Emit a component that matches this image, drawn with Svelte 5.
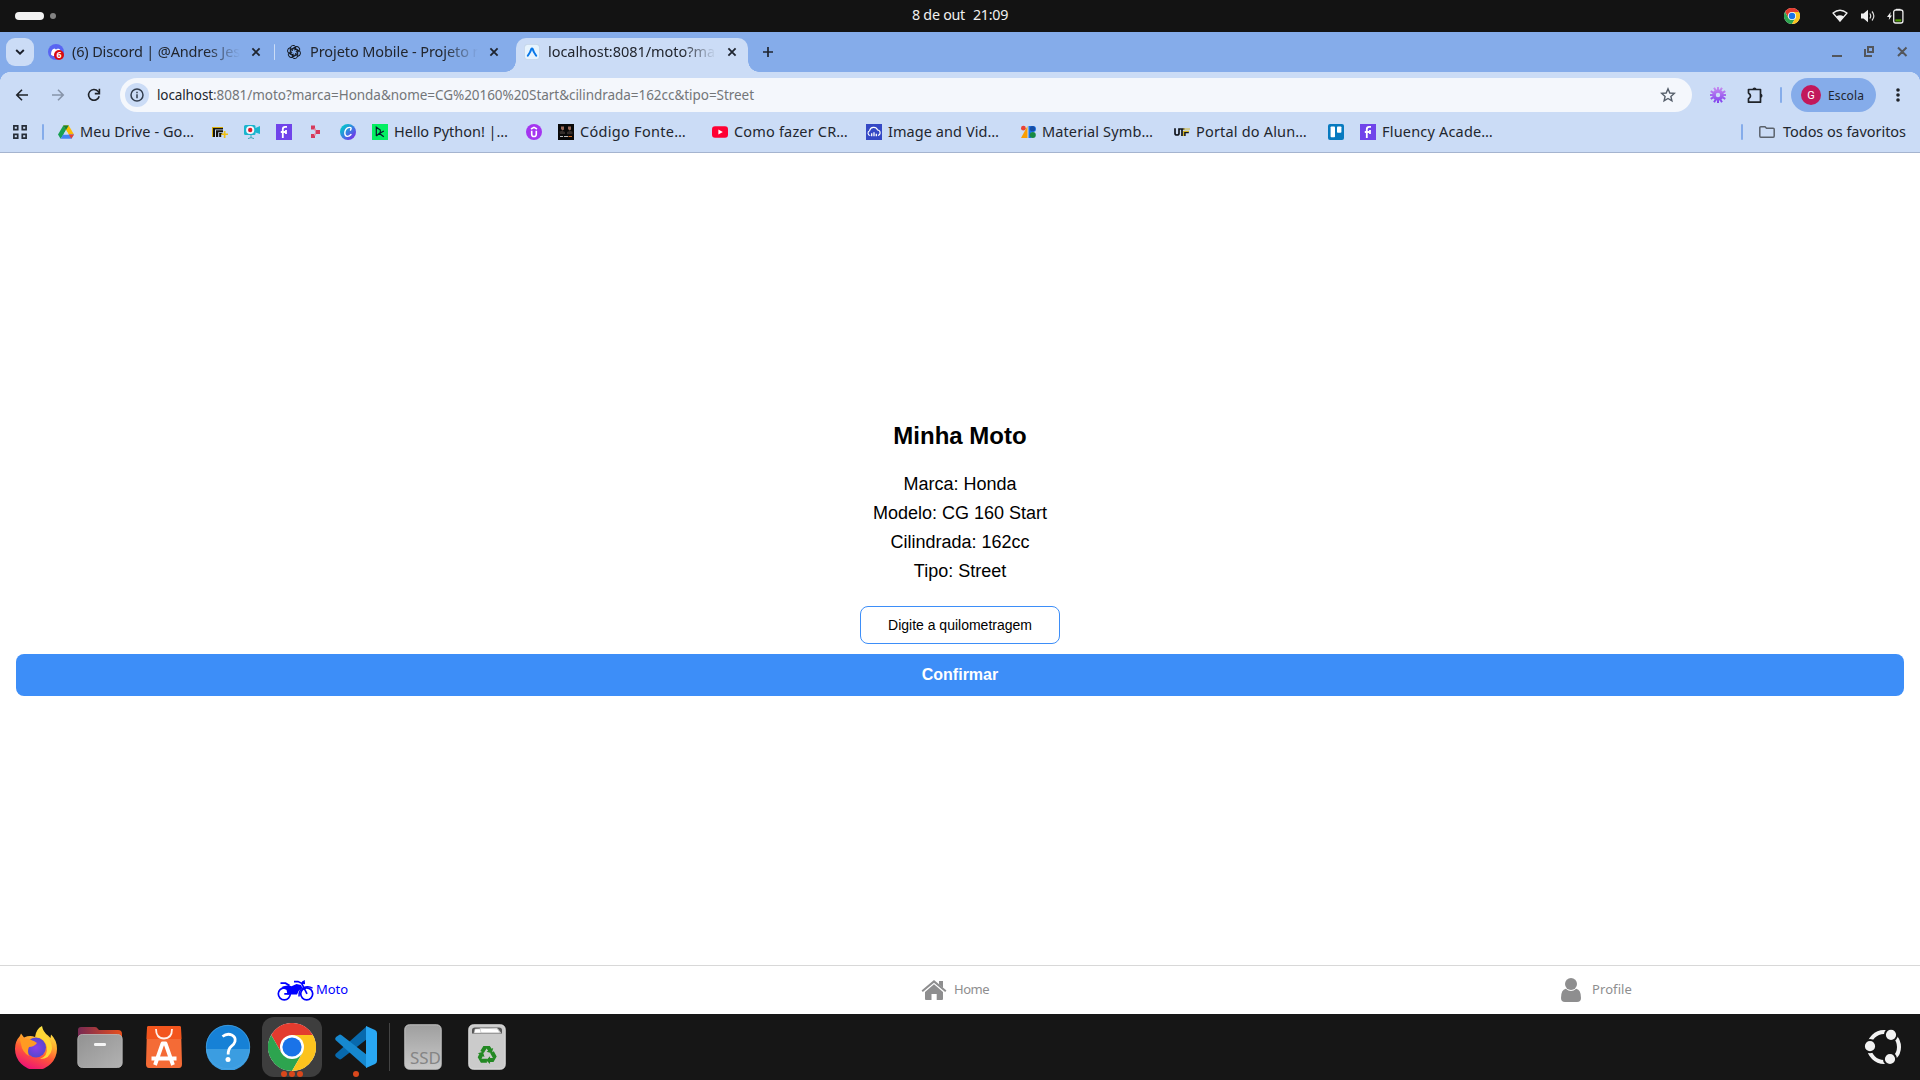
<script>
  // Spreads the letters of a label so that it fills the given width.
  function fit(node, width) {
    const natural = node.getBoundingClientRect().width;
    const count = node.textContent.length;
    node.style.letterSpacing = `${(width - natural) / count}px`;
  }

  const tabs = [
    { icon: 'discord', title: '(6) Discord | @Andres Jes', width: 168, kind: 'first' },
    { icon: 'gpt', title: 'Projeto Mobile - Projeto m', width: 176, kind: 'second' },
    { icon: 'expo', title: 'localhost:8081/moto?ma', width: 167, kind: 'active' }
  ];

  const bookmarks = [
    { icon: 'drive', label: 'Meu Drive - Go…', text: 114, slot: 154 },
    { icon: 'utfplus', slot: 32 },
    { icon: 'camera', slot: 32 },
    { icon: 'fluency', slot: 32 },
    { icon: 'pink', slot: 32 },
    { icon: 'canva', slot: 32 },
    { icon: 'datacamp', label: 'Hello Python! |…', text: 114, slot: 154 },
    { icon: 'udemy', slot: 32 },
    { icon: 'codigo', label: 'Código Fonte…', text: 106, slot: 154 },
    { icon: 'youtube', label: 'Como fazer CR…', text: 114, slot: 154 },
    { icon: 'cloud', label: 'Image and Vid…', text: 111, slot: 154 },
    { icon: 'material', label: 'Material Symb…', text: 111, slot: 154 },
    { icon: 'utf', label: 'Portal do Alun…', text: 111, slot: 154 },
    { icon: 'trello', slot: 32 },
    { icon: 'fluency', label: 'Fluency Acade…', text: 111, slot: 154 }
  ];

  const details = ['Marca: Honda', 'Modelo: CG 160 Start', 'Cilindrada: 162cc', 'Tipo: Street'];
</script>

{#snippet chromeLogo(size)}
  <svg width={size} height={size} viewBox="0 0 48 48">
    <circle cx="24" cy="24" r="24" fill="#fff" />
    <path d="M24 12H44.8A24 24 0 0 0 3.2 12L13.6 30Z" fill="#e33b2e" />
    <path d="M13.6 30L3.2 12A24 24 0 0 0 24 48L34.4 30Z" fill="#2da44f" />
    <path d="M34.4 30L24 48A24 24 0 0 0 44.8 12H24Z" fill="#fcc31e" />
    <circle cx="24" cy="24" r="12" fill="#fff" />
    <circle cx="24" cy="24" r="9.6" fill="#1a73e8" />
  </svg>
{/snippet}

{#snippet closeMark()}
  <svg class="close" width="10" height="10" viewBox="0 0 10 10"><path d="M1.4 1.4l7.2 7.2M8.6 1.4L1.4 8.6" stroke="#1f2530" stroke-width="1.8" /></svg>
{/snippet}

{#snippet favicon(name)}
  <svg class="fav" width="16" height="16" viewBox="0 0 16 16">
    {#if name === 'discord'}
      <circle cx="8" cy="8" r="8" fill="#5865f2" />
      <path d="M3 10.8C3 8 4 5.5 5.2 5l1.5-.5.5.8h2l.5-.8 1.6.5c1.2.8 2 3 2 5.8l-2 1.2H5z" fill="#fff" />
      <circle cx="11" cy="11" r="5" fill="#d80b12" />
      <text x="11" y="14.2" text-anchor="middle" font-size="8.8" font-weight="700" fill="#fff">6</text>
    {:else if name === 'gpt'}
      <g fill="none" stroke="#111720" stroke-width="1">
        {#each [0, 60, 120, 180, 240, 300] as angle}
          <path transform="rotate({angle} 8 8)" d="M4.3 9.6V4.4A3 3 0 0 1 9.6 2.5M6.4 6.9V5.4L10.2 3.2" />
        {/each}
      </g>
    {:else if name === 'expo'}
      <rect x=".3" y=".3" width="15.4" height="15.4" rx="3.5" fill="#e7f4fe" stroke="#b5c6dc" stroke-width=".6" />
      <path d="M3.8 11.8Q6.8 7.5 7.3 5Q8 3.8 8.7 5Q9.2 7.5 12.2 11.8" fill="none" stroke="#0878e8" stroke-width="2" stroke-linecap="round" stroke-linejoin="round" />
    {:else if name === 'drive'}
      <path d="M5.3 1.5h5.4L5.2 11 2.6 14.8 0 10.5z" fill="#18a052" />
      <path d="M5.3 1.5h5.4L16 10.5h-5.3z" fill="#fbbb05" />
      <path d="M5.3 1.5L8 6.1l2.7-4.6z" fill="#188038" />
      <path d="M5.2 10.5H16l-2.6 4.3H2.6z" fill="#4484f3" />
      <path d="M10.8 10.5H16l-2.6 4.3z" fill="#e94235" />
      <path d="M8 6l2.7 4.5H5.3z" fill="#cbdcf6" />
    {:else if name === 'utfplus'}
      <path d="M0 3h11v2.4H3V13H0z" fill="#17150f" />
      <path d="M4 6.2h7v2H6.2V13H4z" fill="#17150f" />
      <path d="M7.2 9h3v1.6h-1V13h-2z" fill="#17150f" />
      <path d="M0 3h11v.9H1V13H0z" fill="#d9ad08" />
      <path d="M9.3 9.5H16v1.6H9.3zM11.8 7h1.7v7h-1.7z" fill="#f0bf12" />
    {:else if name === 'camera'}
      <path d="M0 2.5Q0 1 1.5 1H10q1.5 0 1.5 1.5V4L16 2v8l-4.5-1.5V10Q11.5 11 10 11H1.5Q0 11 0 9.5z" fill="#19b5ce" />
      <circle cx="6.2" cy="6" r="4.1" fill="#f5f7fa" /><circle cx="6.2" cy="6" r="2.2" fill="#e1192a" />
      <path d="M7 11v2.5M4 14.6q3-2 6 0" stroke="#3aa9b9" fill="none" />
    {:else if name === 'fluency'}
      <path d="M0 0h16v16H0z" fill="#7044ea" />
      <path d="M6.8 14V5.3Q6.8 2.9 9.2 2.9H11M4.8 8H10M10 6v4" fill="none" stroke="#fff" stroke-width="1.8" />
    {:else if name === 'pink'}
      <path d="M3 1.5h4v4H3zM7.5 6H12v4H7.5zM3 10h4v4H3z" fill="#d63a5c" /><path d="M6 4.5h2v2H6zM6 9.5h2v2H6z" fill="#e591a8" />
    {:else if name === 'canva'}
      <defs><linearGradient id="canva" x1="0" y1="0" x2="1" y2="1"><stop offset=".15" stop-color="#04c3cc" /><stop offset=".55" stop-color="#3e76e4" /><stop offset=".9" stop-color="#7d2ae8" /></linearGradient></defs>
      <circle cx="8" cy="8" r="8" fill="url(#canva)" />
      <path d="M10.5 6.1Q12.2 3.4 9.4 3.4C6.2 3.4 4.7 7 4.8 9.3C5 13.4 9 13 11 10.5" fill="none" stroke="#fff" stroke-width="1.4" stroke-linecap="round" />
    {:else if name === 'datacamp'}
      <path d="M0 0h16v16H0z" fill="#03ef62" />
      <path d="M4.3 12V3.2L8.3 6v2.5L4.3 12M11.8 7L7.5 9.5l4.3 3.2" fill="none" stroke="#05192d" stroke-width="1.2" />
    {:else if name === 'udemy'}
      <circle cx="8" cy="8" r="8" fill="#a435f0" />
      <path d="M5.7 6.8v3.4Q5.7 12.5 8 12.5t2.3-2.3V6.8M5 5L8 3.3 11 5" fill="none" stroke="#fff" stroke-width="1.6" />
    {:else if name === 'codigo'}
      <path d="M0 0h16v16H0z" fill="#090909" />
      <path d="M3 2.5h3v3L4.5 6.5 3 5zM10 2.5h3v3L11.5 6.5 10 5z" fill="#9b6b5a" />
      <path d="M1.5 7.5L4 6.8l3 1.2v2H2zM9 8l3-1.2 2.5 1v2.5H9z" fill="#342d2a" />
      <path d="M2 12.5h3M6 12.5h4" stroke="#b9b9b9" stroke-width="1" /><path d="M10.5 12.5H14" stroke="#d26b24" />
    {:else if name === 'youtube'}
      <rect y="2.3" width="16" height="11.4" rx="3" fill="#ff0033" /><path d="M6.4 5.5v5L10.8 8z" fill="#fff" />
    {:else if name === 'cloud'}
      <path d="M0 0h16v16H0z" fill="#3448c5" />
      <path d="M4.2 11.5A2.5 2.5 0 0 1 3.6 6.7A4.2 4.2 0 0 1 11.6 6A2.8 2.8 0 0 1 12 11.5" fill="none" stroke="#fff" stroke-width="1.1" />
      <path d="M5.7 9.2v3M8 8.2V12.2M10.3 9.7V12.2" stroke="#fff" stroke-width="1.3" />
    {:else if name === 'material'}
      <circle cx="3.4" cy="4.2" r="2.4" fill="#ea4335" /><path d="M7.5 2v12H1z" fill="#f99f05" /><path d="M8.5 2H13a3 3 0 0 1 0 6h-1.5v6h-3z" fill="#1a73e8" /><circle cx="12.5" cy="4.7" r="2.6" fill="#174ea6" /><circle cx="12.8" cy="11" r="3" fill="#178a43" />
    {:else if name === 'utf'}
      <path d="M1 4.3v5.2Q1 11 3 11t2-1.5V4.3M5.5 5h5M8 5v7M10.8 12V8.5h4" fill="none" stroke="#11151c" stroke-width="1.7" /><path d="M9.2 5H16M10.2 7.4H15M9.6 7v5" fill="none" stroke="#d4b628" stroke-width="1.2" />
    {:else if name === 'trello'}
      <rect width="16" height="16" rx="2" fill="#087abf" /><rect x="2.6" y="2.4" width="4.4" height="10.8" rx=".8" fill="#fff" /><rect x="9" y="2.4" width="4.4" height="6.4" rx=".8" fill="#fff" />
    {/if}
  </svg>
{/snippet}

<div class="screen">
  <header class="topbar">
    <div class="workspaces"><span class="pill"></span><span class="dot"></span></div>
    <div class="clock"><span use:fit={53}>8 de out</span><span use:fit={35}>21:09</span></div>
    <div class="tray">
      {@render chromeLogo(16)}
      <svg class="wifi" width="16" height="14" viewBox="0 0 16 14"><path d="M1 4Q8-1.5 15 4L8 12.2z" fill="none" stroke="#f0f0f0" stroke-width="1.3" stroke-linejoin="round" /><path d="M4.2 7.4Q8 5 11.8 7.4L8 12.4z" fill="#f0f0f0" /></svg>
      <svg class="volume" width="16" height="14" viewBox="0 0 16 14"><path d="M1 4.5h2.5L8 .8v12.4L3.5 9.5H1z" fill="#f0f0f0" /><path d="M9.8 4.5q1.8 2.5 0 5M12 2.5q3.7 4.5 0 9" fill="none" stroke="#dcdcdc" stroke-width="1.2" /></svg>
      <svg width="17" height="16" viewBox="0 0 17 16"><path d="M3.7 4L0 9h2.2L1.8 12 5 7.5H3.2z" fill="#f0f0f0" /><rect x="6.7" y="2" width="9.2" height="13" rx="2" fill="none" stroke="#f0f0f0" stroke-width="1.3" /><path d="M9 .8h4.5V2H9z" fill="#f0f0f0" /><path d="M8.3 11.3h6V13.5h-6z" fill="#4e9a06" /></svg>
    </div>
  </header>

  <div class="tabstrip">
    <div class="search"><svg width="10" height="6" viewBox="0 0 10 6"><path d="M1.2 1L5 4.7 8.8 1" fill="none" stroke="#1b202a" stroke-width="1.9" /></svg></div>
    {#each tabs as tab}
      <div class="tab {tab.kind}">
        {@render favicon(tab.icon)}
        <div class="title"><span use:fit={tab.width}>{tab.title}</span></div>
        {@render closeMark()}
      </div>
    {/each}
    <svg class="plus" width="12" height="12" viewBox="0 0 12 12"><path d="M6 1v10M1 6h10" stroke="#1f2530" stroke-width="1.7" /></svg>
    <svg class="controls" width="76" height="12" viewBox="0 0 76 12"><path d="M0 10h10" stroke="#53565c" stroke-width="2" /><g fill="none" stroke="#53565c" stroke-width="2"><path d="M36 1h5v5h-5zM33 3v7h7M66 1.5l8.5 8.5M74.5 1.5L66 10" /></g></svg>
  </div>

  <div class="chrome-body">
    <div class="toolbar">
      <svg width="14" height="14" viewBox="0 0 14 14"><path d="M13 7H2M7 1.8L1.8 7 7 12.2" fill="none" stroke="#1f2329" stroke-width="1.6" /></svg>
      <svg width="14" height="14" viewBox="0 0 14 14"><path d="M1 7h11M7 1.8L12.2 7 7 12.2" fill="none" stroke="#8794a9" stroke-width="1.6" /></svg>
      <svg width="14" height="14" viewBox="0 0 14 14"><path d="M12.2 8.2A5.4 5.4 0 1 1 11 3.3L12.3 4.7" fill="none" stroke="#1f2329" stroke-width="1.6" /><path d="M12.4.8v4.8H7.8" fill="none" stroke="#1f2329" stroke-width="1.6" /></svg>
      <div class="omnibox">
        <div class="info"><svg width="14" height="14" viewBox="0 0 14 14"><circle cx="7" cy="7" r="6" fill="none" stroke="#333e4e" stroke-width="1.5" /><path d="M7 6.2v4M7 3.7v1.5" stroke="#333e4e" stroke-width="1.5" /></svg></div>
        <div class="url"><b use:fit={56}>localhost</b><span use:fit={541}>:8081/moto?marca=Honda&amp;nome=CG%20160%20Start&amp;cilindrada=162cc&amp;tipo=Street</span></div>
        <svg class="star" width="16" height="16" viewBox="0 0 16 16"><path d="M8 1.8l1.8 4.2 4.5.4-3.4 3 1 4.4L8 11.5l-3.9 2.3 1-4.4-3.4-3 4.5-.4z" fill="none" stroke="#555e6a" stroke-width="1.4" /></svg>
      </div>
      <svg class="gear" width="16" height="16" viewBox="0 0 16 16">
        <defs><linearGradient id="gear" gradientUnits="userSpaceOnUse" x1="0" y1="0" x2="0" y2="16"><stop offset="0" stop-color="#c88cf0" /><stop offset="1" stop-color="#8042ee" /></linearGradient></defs>
        <circle cx="8" cy="8" r="4" fill="none" stroke="url(#gear)" stroke-width="3.6" />
        <path d="M7 0h2v3H7zM7 13h2v3H7zM0 7h3v2H0zM13 7h3v2h-3zM3.2 1.2l1.7-1 1.5 2.6-1.7 1zM11.1.2l1.7 1-1.5 2.6-1.7-1zM1.2 3.2L3.8 4.7 2.8 6.4.2 4.9zM14.8 3.2l1 1.7-2.6 1.5-1-1.7zM.2 11.1l2.6-1.5 1 1.7-2.6 1.5zM13.2 9.6l2.6 1.5-1 1.7-2.6-1.5zM4.7 12.2l1.7 1-1.5 2.6-1.7-1zM11.3 12.2l1.5 2.6-1.7 1-1.5-2.6z" fill="url(#gear)" />
      </svg>
      <svg class="puzzle" width="17" height="17" viewBox="0 0 17 17"><path d="M1.5 2.5h12v12.7h-12v-3.4q4-2.7 0-5.8z" fill="none" stroke="#1f2329" stroke-width="1.7" stroke-linejoin="round" /><path d="M5.5 2.5a2 2 0 0 1 4 0zM13.5 6.8a2 2 0 0 1 0 4z" fill="#1f2329" /></svg>
      <span class="rule"></span>
      <div class="profile"><span class="avatar">G</span><span use:fit={36}>Escola</span></div>
      <svg class="dots" width="4" height="14" viewBox="0 0 4 14" fill="#1f2329"><circle cx="2" cy="2" r="1.8" /><circle cx="2" cy="7" r="1.8" /><circle cx="2" cy="12" r="1.8" /></svg>
    </div>
    <div class="bookmarks">
      <svg width="14" height="14" viewBox="0 0 14 14" fill="none" stroke="#252c37" stroke-width="1.7"><path d="M.9.9h3.8v3.8H.9zM9.3.9h3.8v3.8H9.3zM.9 9.3h3.8v3.8H.9zM9.3 9.3h3.8v3.8H9.3z" /></svg>
      <span class="rule first-rule"></span>
      {#each bookmarks as item}
        <div class="bookmark" style:width="{item.slot}px">
          {@render favicon(item.icon)}
          {#if item.label}<span class="label" use:fit={item.text}>{item.label}</span>{/if}
        </div>
      {/each}
      <div class="all">
        <span class="rule"></span>
        <svg width="16" height="12" viewBox="0 0 16 12"><path d="M.8 10V1.8Q.8.8 1.8.8H6L7.5 2.3h6.7q1 0 1 1V10q0 1.2-1 1.2H1.8q-1 0-1-1.2z" fill="none" stroke="#5b626c" stroke-width="1.5" /></svg>
        <span class="label" use:fit={123}>Todos os favoritos</span>
      </div>
    </div>
  </div>

  <main>
    <h1>Minha Moto</h1>
    {#each details as line}<p>{line}</p>{/each}
    <div class="field">Digite a quilometragem</div>
    <div class="confirm">Confirmar</div>
  </main>

  <nav>
    <div class="nav-item moto">
      <svg width="38" height="21" viewBox="0 0 38 21">
        <g fill="none" stroke="#00f"><circle cx="7.3" cy="13.8" r="6" stroke-width="1.7" /><circle cx="29.7" cy="13.8" r="6" stroke-width="1.7" /><path d="M30 13.8L24.3 2.6M17 1.6h4l3.5 1.6H28" stroke-width="1.7" /><path d="M3.5 3.2h5L12.5 5.6M7.3 13.8h5" stroke-width="1.8" /><path d="M22 16.5Q21.5 9.5 26.5 7.6Q31.5 5.6 35.5 8.2" stroke-width="1.5" /></g>
        <path d="M5.5 6.5L11.5 5.2l3 1L19.5 4l4.5 1 1.3 2.8-3.5 3L20 14.5H10.5l-1-4.7L5 8.2z" fill="#00f" /><path d="M25 1.6L27.8 0v4.2L25 3.8z" fill="#00f" />
      </svg>
      <span use:fit={32}>Moto</span>
    </div>
    <div class="nav-item home">
      <svg width="26" height="20" viewBox="0 0 26 20" fill="#8e8e8f"><path d="M13 4.3L22 12v7q0 1-1 1h-5.3v-6h-5.2v6H5q-1 0-1-1v-7z" /><path d="M18 1h4v7l-4-3.4z" /><path d="M1.2 11.2L13 1.4 24.8 11.2" fill="none" stroke="#8e8e8f" stroke-width="2" /></svg>
      <span use:fit={35}>Home</span>
    </div>
    <div class="nav-item person">
      <svg width="22" height="24" viewBox="0 0 22 24" fill="#8e8e8f"><circle cx="11" cy="6" r="6" /><path d="M5.8 10.8Q11 15.2 16.2 10.8Q21 11.8 21 20Q21 24 17 24H5Q1 24 1 20Q1 11.8 5.8 10.8z" /></svg>
      <span use:fit={40}>Profile</span>
    </div>
  </nav>

  <footer>
    <div class="app">
      <svg width="44" height="44" viewBox="0 0 44 44">
        <defs>
          <linearGradient id="fox" x1=".75" y1="0" x2=".35" y2="1"><stop offset="0" stop-color="#fff44f" /><stop offset=".35" stop-color="#ffb02e" /><stop offset=".62" stop-color="#ff5a36" /><stop offset="1" stop-color="#ec0f78" /></linearGradient>
          <radialGradient id="globe"><stop offset="0" stop-color="#8b3fe8" /><stop offset="1" stop-color="#5548cf" /></radialGradient>
        </defs>
        <path d="M28 1Q29 7 34 10.5L36.5 13L37 9.5Q43 15 43 24A21 21 0 0 1 1 24Q1 16 6 11L7 8.5 10 12.5Q16 10 21 12Q22 4 28 1z" fill="url(#fox)" />
        <circle cx="22" cy="22.5" r="10" fill="url(#globe)" />
        <path d="M6 10Q7 13 10 14Q18 14 23 18Q20 22 15 22Q13 26 15 31Q8 27 7 19Q5 14 6 10z" fill="#ff9b22" />
        <path d="M22 12Q31 13 33 22Q34 31 26 34Q36 34 38 24Q38 15 32 11L28 4Q22 6 22 12z" fill="#ffd735" />
      </svg>
    </div>
    <div class="app">
      <svg width="46" height="42" viewBox="0 0 46 42">
        <defs><linearGradient id="folder"><stop offset="0" stop-color="#772953" /><stop offset="1" stop-color="#e8501e" /></linearGradient><linearGradient id="drawer" x1="0" y1="0" x2="1" y2="1"><stop offset="0" stop-color="#929292" /><stop offset="1" stop-color="#b2b2b2" /></linearGradient></defs>
        <path d="M1 8V4q0-3 3-3h14q2 0 3 2l1 1h19q4 0 4 4v12H1z" fill="url(#folder)" /><rect x=".8" y="8.5" width="44.4" height="33" rx="4.5" fill="url(#drawer)" stroke="#bbb" stroke-width=".8" /><rect x="17" y="17" width="12" height="3" rx="1.3" fill="#f5f5f5" />
      </svg>
    </div>
    <div class="app">
      <svg width="38" height="44" viewBox="0 0 38 44">
        <path d="M4 1h30q2 0 2 2l1 36q0 4-3 4H4q-3 0-3-4L2 3q0-2 2-2z" fill="#f46b36" /><path d="M4 1h30q2 0 2 2l.4 11H1.6L2 3q0-2 2-2z" fill="#f3551d" />
        <path d="M11 4q0 9.5 8 9.5T27 4" fill="none" stroke="#fff1ea" stroke-width="1.8" /><path d="M10 40L17.5 18.5H20.5L28 40M6.5 33.5H31.5" fill="none" stroke="#fff" stroke-width="3.8" stroke-linejoin="round" />
      </svg>
    </div>
    <div class="app">
      <svg width="46" height="46" viewBox="0 0 46 46"><circle cx="23" cy="23" r="22" fill="#1681d6" /><path d="M1 25h44a22 22 0 0 1-44 0z" fill="#3b9de1" /><circle cx="23" cy="23" r="21.7" fill="none" stroke="#4aa6e5" stroke-width=".7" /><path d="M17.5 12.5Q22 9 26.8 11Q31 13 30 17.5Q29.4 20 26.3 22.3Q23 25 23.2 30.5" fill="none" stroke="#fff" stroke-width="2.8" /><circle cx="23" cy="35.5" r="2.5" fill="#fff" /></svg>
    </div>
    <div class="app current">{@render chromeLogo(48)}<span class="running"><i></i><i></i><i></i></span></div>
    <div class="app">
      <svg width="44" height="44" viewBox="0 0 44 44"><path d="M2 32L5 34Q6 35 8 33.5L33 14V1L1.5 29Q.6 30.5 2 32z" fill="#0869ad" /><path d="M2 12L5 10Q6 9 8 10.5L33 30v13L1.5 15Q.6 13.5 2 12z" fill="#1688cf" /><path d="M32 1l9 4q2 1 2 3v28q0 2-2 3l-9 4z" fill="#29a7f3" /></svg>
      <span class="running"><i></i></span>
    </div>
    <span class="divider"></span>
    <div class="app drive">
      <svg width="38" height="46" viewBox="0 0 38 46"><defs><linearGradient id="metal" x1="0" y1="0" x2="0" y2="1"><stop offset="0" stop-color="#9f9f9f" /><stop offset="1" stop-color="#c8c8c8" /></linearGradient></defs><rect x=".8" y=".8" width="36.4" height="44.4" rx="4.5" fill="url(#metal)" stroke="#c4c4c4" /><text x="6" y="40" textLength="31" lengthAdjust="spacingAndGlyphs" font-size="16.5" fill="#858585">SSD</text></svg>
    </div>
    <div class="app">
      <svg width="38" height="46" viewBox="0 0 38 46">
        <rect x=".8" y=".8" width="36.4" height="44.4" rx="4.5" fill="#cbcbcb" stroke="#e1e1e1" /><path d="M4 9.5V6q0-2.5 3-2.5h24q3 0 3 2.5v3.5z" fill="#555" /><path d="M6 9l1-4 22-1 3 5zM12 4l18 1 3 4H13z" fill="#fff" stroke="#aaa" stroke-width=".5" />
        <g fill="#238923">{#each [0, 120, 240] as angle}<path transform="rotate({angle} 19 31)" d="M12.3 27L15.4 21.9H21.8L23.6 24.8L25.2 23.9L23.9 29.2L18.5 27.8L20.1 26.8L18.6 24.4L15.8 29.1Z" />{/each}</g>
      </svg>
    </div>
    <svg class="ubuntu" width="38" height="38" viewBox="0 0 38 38">
      <circle cx="20" cy="19" r="15" fill="none" stroke="#f2f2f2" stroke-width="4" />
      <g fill="#f2f2f2" stroke="#161616" stroke-width="2"><circle cx="6" cy="18.2" r="6.1" /><circle cx="27" cy="6.8" r="6.1" /><circle cx="26" cy="31" r="6.1" /></g>
    </svg>
  </footer>
</div>

<style>
  :global(body) { margin: 0; overflow: hidden; }
  .screen { width: 1920px; height: 1080px; display: flex; flex-direction: column; background: #fff; font-family: "Noto Sans", "Open Sans", sans-serif; font-size: 14.5px; color: #22262e; white-space: nowrap; overflow: hidden; }
  .screen * { box-sizing: border-box; }
  svg { display: block; flex: none; }

  .topbar { height: 32px; flex: none; background: #131313; color: #f0f0f0; display: grid; grid-template-columns: 1fr 96px 1fr; align-items: center; }
  .workspaces { display: flex; align-items: center; gap: 6px; padding-left: 15px; }
  .pill { width: 29px; height: 8px; border-radius: 4px; background: #f2f2f2; }
  .dot { width: 6px; height: 6px; border-radius: 50%; background: #838383; }
  .clock { display: flex; justify-content: space-between; font-size: 14.3px; line-height: 20px; padding-bottom: 2px; }
  .tray { display: flex; align-items: center; justify-content: flex-end; padding-right: 16px; }
  .wifi { margin-left: 32px; }
  .volume { margin: 0 11px 0 12px; }

  .tabstrip { height: 40px; flex: none; background: #85acea; display: flex; align-items: center; padding-left: 6px; }
  .search { width: 28px; height: 28px; border-radius: 9px; background: #cbdcf6; display: grid; place-items: center; }
  .tab { display: flex; align-items: center; position: relative; height: 34px; margin-top: 6px; padding-bottom: 6px; flex: none; }
  .title { flex: none; height: 24px; line-height: 23px; mask-image: linear-gradient(90deg, #000 80%, transparent); }
  .first { width: 241px; padding-left: 14px; }
  .first .title { width: 168px; margin-left: 8px; }
  .close { margin-left: 11px; flex: none; }
  .first .close { margin-left: 11px; }
  .first::after { content: ""; width: 2px; height: 16px; margin-left: 13px; background: #cbdcf6; border-radius: 1px; }
  .first .close, .first .title { flex: none; }
  .second { width: 241px; padding-left: 11px; }
  .second .title { width: 168px; margin-left: 8px; }
  .active { width: 232px; padding-left: 8px; background: #cbdcf6; border-radius: 10px 10px 0 0; }
  .active .title { width: 168px; margin-left: 8px; }
  .active::before, .active::after { content: ""; position: absolute; bottom: 0; width: 11px; height: 11px; }
  .active::before { left: -11px; background: radial-gradient(circle at 0 0, transparent 10.5px, #cbdcf6 11px); }
  .active::after { right: -11px; background: radial-gradient(circle at 100% 0, transparent 10.5px, #cbdcf6 11px); }
  .plus { margin-left: 14px; }
  .controls { margin: 0 12px 0 auto; }

  .chrome-body { height: 81px; flex: none; border-bottom: 1px solid #a5b4cf; background: radial-gradient(circle at 10px 10px, #cbdcf6 9.7px, #85acea 10.2px) 0 0 / 10px 10px no-repeat, radial-gradient(circle at 0 10px, #cbdcf6 9.7px, #85acea 10.2px) 100% 0 / 10px 10px no-repeat, linear-gradient(#cbdcf6, #cbdcf6); }
  .toolbar { height: 46px; padding: 0 20px 0 15px; display: flex; align-items: center; }
  .toolbar > svg:nth-child(2), .toolbar > svg:nth-child(3) { margin-left: 22px; }
  .omnibox { width: 1572px; height: 34px; margin-left: 19px; border-radius: 17px; background: #f4f7fc; display: flex; align-items: center; }
  .info { width: 24px; height: 24px; margin: 0 8px 0 5px; border-radius: 50%; background: #cbdcf6; display: grid; place-items: center; }
  .url { display: flex; flex: 1; font-size: 13.5px; line-height: 22px; color: #737679; }
  .url > * { flex: none; align-self: center; }
  .url b { font-weight: 400; color: #22262e; }
  .star { margin-right: 16px; }
  .gear { margin-left: 18px; }
  .puzzle { margin-left: 21px; }
  .rule { width: 2px; height: 16px; border-radius: 1px; background: #85acea; flex: none; }
  .toolbar .rule { margin-left: 16px; }
  .profile { width: 85px; height: 34px; margin-left: 9px; padding-left: 10px; border-radius: 17px; background: #85acea; display: flex; align-items: center; gap: 7px; font-size: 12px; }
  .avatar { width: 20px; height: 20px; border-radius: 50%; background: #c2185b; color: #fff; display: grid; place-items: center; font: 11px Roboto, sans-serif; }
  .dots { margin-left: auto; }

  .bookmarks { height: 34px; margin-top: -3px; padding: 0 14px 0 13px; display: flex; align-items: center; line-height: 20px; }
  .first-rule { margin: 0 14px 0 15px; }
  .bookmark { display: flex; align-items: center; gap: 6px; flex: none; }
  .label { flex: none; padding-bottom: 2px; }
  .all { display: flex; align-items: center; margin-left: auto; }
  .all svg { margin: 0 8px 0 16px; }

  main { height: 812px; flex: none; display: flex; flex-direction: column; align-items: center; padding: 269px 16px 0; color: #000; font-family: "Liberation Sans", sans-serif; }
  h1 { margin: 0 0 24px; font-size: 24px; line-height: 28px; }
  p { margin: 0 0 8px; font-size: 18px; line-height: 21px; }
  .field { width: 200px; height: 38px; margin-top: 16px; border: 1px solid #3d8ef8; border-radius: 8px; display: grid; place-items: center; font-size: 14px; }
  .confirm { width: 100%; height: 42px; margin-top: 10px; border-radius: 8px; background: #3d8ef8; color: #fff; display: grid; place-items: center; font-size: 16px; font-weight: 700; line-height: 18px; }

  nav { height: 49px; flex: none; border-top: 1px solid #d8d8d8; display: grid; grid-template-columns: repeat(3, 640px); font-size: 13px; color: #8e8e8f; }
  .nav-item { display: flex; align-items: center; line-height: 18px; }
  .nav-item span { padding-bottom: 2px; }
  .moto { padding-left: 277px; gap: 1px; color: #00f; }
  .home { padding-left: 281px; gap: 7px; }
  .person { padding-left: 280px; gap: 10px; }

  footer { height: 66px; flex: none; background: #161616; display: flex; align-items: center; padding: 0 18px 0 6px; }
  .app { width: 60px; height: 60px; margin-right: 4px; flex: none; display: grid; place-items: center; position: relative; border-radius: 12px; }
  .current { background: #3e3e3e; }
  .running { position: absolute; bottom: 0; left: 0; right: 0; display: flex; justify-content: center; gap: 2px; }
  .running i { width: 6px; height: 6px; border-radius: 50%; background: #d9481c; }
  .divider { width: 1px; height: 48px; background: #444; margin: 0 3px 0 -1px; }
  .ubuntu { margin-left: auto; }
</style>
